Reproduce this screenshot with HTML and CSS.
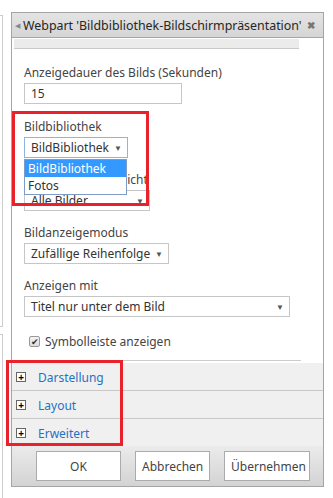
FILE: index.html
```html
<!DOCTYPE html>
<html lang="de">
  <head>
    <meta charset="UTF-8" />
    <meta name="viewport" content="width=device-width, initial-scale=1.0" />
    <title>Webpart Bildbibliothek-Bildschirmpräsentation</title>
    <link rel="stylesheet" href="styles.css">
  </head>
  <body>
    <div class="page">
      <div class="stub">
        <div class="stub-top"></div>
        <div class="stub-bottom"></div>
      </div>

      <div class="panel">
        <div class="panel-head">
          <span class="head-arrow">&#9664;</span>
          <span class="head-title">Webpart 'Bildbibliothek-Bildschirmpräsentation'</span>
          <span class="head-close">&#10006;</span>
        </div>
        <div class="strip"></div>

        <div class="fields">
          <div class="field first">
            <label>Anzeigedauer des Bilds (Sekunden)</label>
            <div class="input w-158">15</div>
          </div>

          <div class="field">
            <label>Bildbibliothek</label>
            <div class="select focus w-104">BildBibliothek<span class="arrow">&#9660;</span></div>
            <ul class="options">
              <li class="selected">BildBibliothek</li>
              <li>Fotos</li>
            </ul>
          </div>

          <div class="field">
            <label>Bildbibliotheksansicht</label>
            <div class="select w-126">Alle Bilder<span class="arrow">&#9660;</span></div>
          </div>

          <div class="field">
            <label>Bildanzeigemodus</label>
            <div class="select w-145">Zufällige Reihenfolge<span class="arrow">&#9660;</span></div>
          </div>

          <div class="field">
            <label>Anzeigen mit</label>
            <div class="select w-266">Titel nur unter dem Bild<span class="arrow">&#9660;</span></div>
          </div>

          <div class="check-row">
            <span class="checkbox">&#10004;</span>
            <span>Symbolleiste anzeigen</span>
          </div>
        </div>

        <div class="separator"></div>

        <div class="sections">
          <div class="section"><span class="plus">+</span><a href="#">Darstellung</a></div>
          <div class="section"><span class="plus">+</span><a href="#">Layout</a></div>
          <div class="section"><span class="plus">+</span><a href="#">Erweitert</a></div>
        </div>

        <div class="footer">
          <button class="btn w-ok">OK</button>
          <button class="btn w-cancel">Abbrechen</button>
          <button class="btn w-apply">Übernehmen</button>
        </div>

        <div class="mark mark-library"></div>
        <div class="mark mark-sections"></div>
      </div>
    </div>
  </body>
</html>
```

FILE: styles.css
```css
body {
  margin: 0;
  background-color: white;
  font-family: "Noto Sans", "Open Sans", sans-serif;
  font-size: 12px;
  color: #444;
}

.page {
  display: flex;
  align-items: flex-start;
}

.stub {
  display: flex;
  flex-direction: column;
  width: 3px;
  margin-top: 15px;
  margin-right: 8px;
}

.stub-top {
  height: 310px;
  border-top: 1px solid #ccc;
  border-right: 1px solid #ccc;
  border-bottom: 1px solid #ccc;
}

.stub-bottom {
  height: 170px;
  margin-top: 7px;
  border-top: 1px solid #ccc;
  border-right: 1px solid #ccc;
}

.panel {
  position: relative;
  width: 311px;
  margin-top: 12px;
  border: 1px solid #a5a5a5;
  border-top: none;
  background-color: white;
}

.panel-head {
  display: flex;
  align-items: center;
  height: 24px;
  margin: 0 -1px;
  padding: 0 8px 0 3px;
  border: 1px solid #a5a5a5;
  background: linear-gradient(#e4e4e4, #d5d5d5);
}

.head-arrow {
  font-size: 7px;
  color: #888;
  margin-right: 3px;
}

.head-title {
  flex: 1;
  font-size: 12.4px;
  color: #262626;
  white-space: nowrap;
}

.head-close {
  font-size: 10px;
  font-weight: bold;
  color: #777;
}

.strip {
  width: 285px;
  height: 9px;
  margin: 1px 0 0 2px;
  background-color: #ebebeb;
  border-bottom: 1px solid #c9c9c9;
}

.fields {
  display: flex;
  flex-direction: column;
  gap: 12px;
  padding: 14px 0 0 12px;
}

.field {
  position: relative;
  display: flex;
  flex-direction: column;
  gap: 2px;
}

.field.first {
  margin-bottom: 1px;
}

.field label {
  padding-top: 2px;
  line-height: 16px;
  white-space: nowrap;
}

.input,
.select {
  box-sizing: border-box;
  display: flex;
  align-items: center;
  height: 21px;
  padding: 0 6px;
  border: 1px solid #c6c6c6;
  color: #333;
  font-size: 12px;
  white-space: nowrap;
  background-color: white;
}

.select {
  justify-content: space-between;
  padding-right: 5px;
}

.select.focus {
  border-color: #8fb3e2;
}

.arrow {
  font-size: 8px;
  color: #555;
}

.options {
  position: absolute;
  top: 42px;
  left: 0;
  width: 101px;
  margin: 0;
  padding: 0;
  list-style: none;
  border: 1px solid #7e9cc7;
  background-color: white;
  z-index: 2;
  font-size: 12px;
  color: #333;
}

.options li {
  height: 17px;
  line-height: 17px;
  padding-left: 3px;
}

.options li.selected {
  background-color: #3399ff;
  color: white;
}

.w-158 { width: 158px; }
.w-104 { width: 104px; }
.w-126 { width: 126px; }
.w-145 { width: 145px; }
.w-266 { width: 266px; }

.check-row {
  display: flex;
  align-items: center;
  gap: 5px;
  height: 16px;
  margin: 4px 0 0 5px;
}

.checkbox {
  display: flex;
  justify-content: center;
  align-items: center;
  box-sizing: border-box;
  width: 11px;
  height: 11px;
  border: 1px solid #999;
  border-radius: 2px;
  background: linear-gradient(#f4f4f4, #dcdcdc);
  font-size: 9px;
  color: #333;
}

.separator {
  width: 287px;
  height: 1px;
  margin: 11px 0 2px 2px;
  background-color: #ccc;
}

.sections {
  background-color: #f0f0f0;
}

.section {
  display: flex;
  align-items: center;
  gap: 12px;
  height: 27px;
  padding-left: 4px;
  border-bottom: 1px solid #c8c8c8;
}

.section:last-child {
  border-bottom: none;
}

.plus {
  box-sizing: border-box;
  display: flex;
  justify-content: center;
  align-items: center;
  width: 10px;
  height: 10px;
  border: 1px solid #666;
  background-color: white;
  color: black;
  font-size: 10px;
  font-weight: bold;
  line-height: 1;
}

.section a {
  padding-top: 2px;
  color: #1f73c4;
  text-decoration: none;
  font-size: 12px;
}

.footer {
  display: flex;
  gap: 14px;
  padding: 5px 0 5px 24px;
  background: linear-gradient(#ebebeb, #d3d3d3);
}

.btn {
  height: 30px;
  border: 1px solid #ababab;
  background-color: white;
  font-family: inherit;
  font-size: 12px;
  color: #444;
}

.w-ok { width: 85px; }
.w-cancel { width: 75px; }
.w-apply { width: 86px; }

.mark {
  position: absolute;
  border: 3px solid #e8212b;
  z-index: 3;
}

.mark-library {
  left: 0;
  top: 99px;
  width: 131px;
  height: 89px;
}

.mark-sections {
  left: -6px;
  top: 348px;
  width: 111px;
  height: 80px;
}
```
